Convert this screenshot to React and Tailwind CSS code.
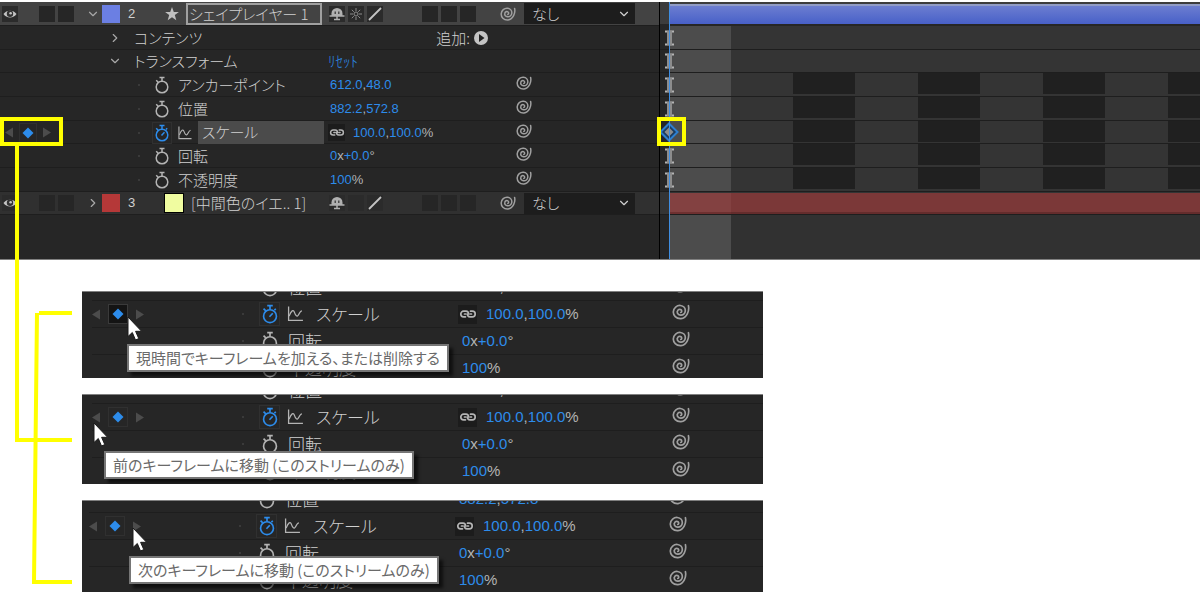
import React from 'react';
import { ChevronDown, ChevronRight } from 'lucide-react';
import clsx from 'clsx';

const PROPERTIES = [
    { name: 'アンカーポイント', value: '612.0,48.0' },
    { name: '位置', value: '882.2,572.8' },
    { name: 'スケール', value: '100.0,100.0%', animated: true },
    { name: '回転', value: '0x+0.0°' },
    { name: '不透明度', value: '100%' },
];

/* ---------- icons ---------- */

const Stopwatch = ({ active, className }) => (
    <svg viewBox="0 0 16 18" fill="none" stroke="currentColor" strokeWidth="1.5" className={className}>
        <circle cx="8" cy="11" r="5.8" />
        <path d="M5.5 1.5h5M8 1.5v3.5M2.2 4.2l2 2" />
        {active && <path d="M7.5 11.5l3-3.2M12 5.5l1.2-1.2" />}
    </svg>
);

const Spiral = ({ className }) => (
    <svg viewBox="0 0 16 14" fill="none" stroke="currentColor" strokeWidth="1.5" strokeLinecap="round" className={className}>
        <path d="M14.6 1.4C15.6 6 13.2 12.4 8 12.9 3.6 13.2 1 10 1.2 6.8 1.4 3.2 4.4 1 7.4 1.2c3 .3 4.6 2.6 4.4 5C11.6 8.6 9.6 10 7.6 9.8 5.4 9.6 4.4 8 4.8 6.4 5.1 4.9 6.8 4.1 8 5c1 .8.7 2.2-.2 2.4" />
    </svg>
);

const GraphIcon = ({ className }) => (
    <svg viewBox="0 0 16 15" fill="none" stroke="currentColor" strokeWidth="1.2" className={className}>
        <path d="M1.5 0.5v13H15" />
        <path d="M2 9.5C4 4 6 3 7 6s2.5 5 4 2 2-3.500 3-3.500" />
    </svg>
);

const LinkIcon = ({ className }) => (
    <svg viewBox="0 0 18 10" fill="none" stroke="currentColor" strokeWidth="1.7" strokeLinecap="round" className={className}>
        <path d="M6.5 7.8H4.600a2.700 2.700 0 0 1 0-5.600H7c2 0 2.500 1.300 2.500 2.800" />
        <path d="M11.5 2.2h1.900a2.700 2.700 0 0 1 0 5.600H11c-2 0-2.500-1.300-2.500-2.800" />
        <path d="M5.5 5h1.5M11 5h1.5" />
    </svg>
);

const EyeIcon = () => (
    <svg viewBox="0 0 16 16" className="size-4">
        <path d="M1.5 8C4 3.5 12 3.5 14.5 8 12 12.5 4 12.5 1.5 8Z" fill="#c4c4c4" />
        <circle cx="8" cy="7.8" r="3.2" fill="#333" />
        <circle cx="8.6" cy="7.2" r="1.3" fill="#c4c4c4" />
    </svg>
);

const ShyIcon = () => (
    <svg viewBox="0 0 16 16" className="size-4">
        <path d="M2.5 10V7.500a5.500 5.500 0 0 1 11 0V10Z" fill="#b0b0b0" />
        <path d="M6.2 5.500v2.500M9.8 5.500v2.500" stroke="#333" strokeWidth="1.2" />
        <path d="M0.500 10h15M8 8v5.500M5 13.500h6" stroke="#b0b0b0" strokeWidth="1.5" />
    </svg>
);

const SunIcon = () => (
    <svg viewBox="0 0 16 16" fill="none" stroke="#8c8c8c" className="size-4">
        <circle cx="8" cy="8" r="2" />
        <path d="M8 2v3M8 11v3M2 8h3M11 8h3M3.8 3.8l2 2M10.200 10.200l2 2M3.800 12.200l2-2M10.200 5.800l2-2" />
    </svg>
);

const SlashIcon = () => (
    <svg viewBox="0 0 16 16" className="size-4">
        <path d="M2 14L14 2" stroke="#c4c4c4" strokeWidth="1.8" />
    </svg>
);

const StarIcon = () => (
    <svg viewBox="0 0 16 16" className="size-4" fill="#c0c0c0">
        <path d="M8 1l1.800 4.900h5.100l-4.100 3.200 1.500 5.100L8 11.200l-4.300 3 1.500-5.100L1.100 5.900h5.100Z" />
    </svg>
);

const Diamond = () => (
    <svg viewBox="0 0 12 12" className="size-3" fill="#2d8ceb">
        <path d="M6 0.5L11.5 6 6 11.5 0.5 6Z" />
    </svg>
);

const Arrow = ({ left }) => (
    <svg viewBox="0 0 8 10" className="h-[11px] w-2" fill="#4c4c4c">
        <path d={left ? 'M8 0v10L0 5Z' : 'M0 0v10l8-5Z'} />
    </svg>
);

const Cursor = ({ className }) => (
    <svg viewBox="0 0 16 25" className={clsx('absolute h-[25px] w-4', className)}>
        <path d="M1 1v19.500l4.300-4 3.200 7.500 3.300-1.400-3.200-7.300h6Z" fill="#fff" stroke="#1a1a1a" />
    </svg>
);

/* ---------- shared pieces ---------- */

// Numbers are blue hot text, separators and units stay grey
const Value = ({ label, value, large }) => (
    <button
        aria-label={label}
        className={clsx(
            "flex items-baseline whitespace-nowrap font-['Liberation_Sans',sans-serif] text-[#2d8ceb]",
            large ? 'text-[15px]' : 'text-[13px]'
        )}
    >
        {value.split(/([,%x°])/).map((part, i) => (
            <span key={i} className={i % 2 ? 'text-[#b4b4b4]' : undefined}>{part}</span>
        ))}
    </button>
);

const KeyNav = ({ pressed, large }) => (
    <div className={clsx('flex items-center', large ? 'gap-2' : 'gap-[6px]')}>
        <button aria-label="前のキーフレーム"><Arrow left /></button>
        <button
            aria-label="キーフレーム"
            className={clsx('grid h-5 place-items-center border', large ? 'w-5' : 'w-[18px]', pressed ? 'border-[#3a3a3a] bg-[#141414]' : 'border-[#303030]')}
        >
            <Diamond />
        </button>
        <button aria-label="次のキーフレーム"><Arrow /></button>
    </div>
);

const StopwatchButton = ({ active, large }) => (
    <button
        aria-label="ストップウォッチ"
        className={clsx(
            'grid shrink-0 place-items-center border',
            large ? 'h-6 w-[21px]' : 'h-[22px] w-5',
            active ? 'border-[#303030] text-[#2d8ceb]' : 'border-transparent text-[#b4b4b4]'
        )}
    >
        <Stopwatch active={active} className={large ? 'h-5 w-[18px]' : 'h-[18px] w-4'} />
    </button>
);

const LinkButton = ({ large }) => (
    <button aria-label="縦横比を固定" className={clsx('grid place-items-center bg-[#1c1c1c] text-[#b4b4b4]', large ? 'h-[19px] w-[19px]' : 'h-[17px] w-[17px]')}>
        <LinkIcon className={large ? 'h-[10px] w-[18px]' : 'h-[9px] w-4'} />
    </button>
);

const PickWhip = ({ large }) => (
    <button aria-label="ピックウィップ" className="pb-1 text-[#a0a0a0]">
        <Spiral className={large ? 'h-4 w-[18px]' : 'h-[14px] w-4'} />
    </button>
);

const Slots = ({ count }) => Array.from({ length: count }, (_, i) => <span key={i} className="size-4 bg-[#262626]" />);

/* ---------- layer list ---------- */

const ROW = 'grid grid-cols-[82px_246px_172px_1fr] items-center border-b border-[#1e1e1e]';

const LayerRow = ({ id, open, swatch, selected, children }) => (
    <div className={clsx(ROW, selected ? 'bg-[#434343]' : 'bg-[#303030]')}>
        <div className="flex items-center gap-[3px] pl-[2px]">
            <button aria-label="表示" className="mr-[18px] bg-[#2b2b2b]"><EyeIcon /></button>
            <Slots count={2} />
        </div>
        <div className="flex items-center">
            <button aria-label="展開" className="w-5 pl-1 text-[#a8a8a8]">
                {open ? <ChevronDown size={14} /> : <ChevronRight size={14} />}
            </button>
            <span className={clsx('h-[18px] w-[18px]', swatch)} />
            <span className="w-11 pl-2 font-['Liberation_Sans',sans-serif] text-[13px]">{id}</span>
            {children}
        </div>
        <div className="flex items-center gap-[3px] pl-px">
            <span className="bg-[#2b2b2b]"><ShyIcon /></span>
            <span className="size-4 bg-[#2b2b2b]">{selected && <SunIcon />}</span>
            <span className="mr-[36px] bg-[#2b2b2b]"><SlashIcon /></span>
            <Slots count={3} />
        </div>
        <div className="flex items-center gap-2">
            <button aria-label="ピックウィップ" className="text-[#a0a0a0]"><Spiral className="h-[14px] w-4" /></button>
            <label className="relative flex items-center">
                <select aria-label="親とリンク" className="h-[21px] w-[111px] appearance-none bg-[#1d1d1d] pl-2 text-[15px] leading-5">
                    <option>なし</option>
                </select>
                <ChevronDown size={14} className="pointer-events-none absolute right-1" />
            </label>
        </div>
    </div>
);

const GroupRow = ({ name, open, children }) => (
    <div className={ROW}>
        <span />
        <div className="flex items-center">
            <button aria-label={name} className="w-[52px] pl-[26px] text-[#a8a8a8]">
                {open ? <ChevronDown size={14} /> : <ChevronRight size={14} />}
            </button>
            {name}
        </div>
        {children}
    </div>
);

const PropertyRow = ({ name, value, animated }) => (
    <div className={ROW}>
        <div className="pl-[5px]">{animated && <KeyNav />}</div>
        <div className="flex items-center">
            <span className="ml-14 mr-3 size-[2px] bg-[#3a3a3a]" />
            <StopwatchButton active={animated} />
            {animated ? (
                <>
                    <GraphIcon className="mx-[5px] h-[14px] w-4 text-[#b4b4b4]" />
                    <span className="mr-1 h-[23px] flex-1 bg-[#4b4b4b] pl-1 leading-[22px]">{name}</span>
                </>
            ) : (
                <span className="pl-[6px]">{name}</span>
            )}
        </div>
        <div className={clsx('flex items-center gap-2', !animated && 'pl-[2px]')}>
            {animated && <LinkButton />}
            <Value label={name} value={value} />
        </div>
        <div className="flex pl-4"><PickWhip /></div>
    </div>
);

const LayerList = () => (
    <div className="w-[660px] shrink-0 border-r border-black bg-[#262626] pb-11">
        <div className="grid grid-rows-[repeat(3,24px_24px_23px)]">
            <LayerRow id="2" open selected swatch="bg-[#6b7fe3]">
                <StarIcon />
                <span className="ml-[6px] mr-[6px] h-[22px] flex-1 whitespace-nowrap border-2 border-[#a0a0a0] pl-px leading-[18px]">
                    シェイプレイヤー 1
                </span>
            </LayerRow>
            <GroupRow name="コンテンツ">
                <div className="flex items-center justify-end gap-1 pr-3">
                    追加:
                    <button aria-label="追加">
                        <svg viewBox="0 0 14 14" className="size-[14px]">
                            <circle cx="7" cy="7" r="7" fill="#c4c4c4" />
                            <path d="M5 3l5.500 4L5 11Z" fill="#222" />
                        </svg>
                    </button>
                </div>
            </GroupRow>
            <GroupRow name="トランスフォーム" open>
                <button className="w-fit text-[#2d8ceb]">ﾘｾｯﾄ</button>
            </GroupRow>
            {PROPERTIES.map((p) => <PropertyRow key={p.name} {...p} />)}
            <LayerRow id="3" swatch="bg-[#b53838]">
                <span className="size-5 border border-black bg-[#f0fca0]" />
                <span className="whitespace-nowrap pl-[7px]">[中間色のイエ.. 1]</span>
            </LayerRow>
        </div>
    </div>
);

/* ---------- timeline ---------- */

const IBeam = () => (
    <svg viewBox="0 0 9 16" className="absolute left-[5px] h-4 w-[9px]" fill="none" stroke="#b4b4b4">
        <path d="M0 1.500h9M0 14.500h9" strokeWidth="2" />
        <path d="M4.500 1v14" strokeWidth="5" stroke="#8c8c8c" />
    </svg>
);

const Keyframe = () => (
    <svg viewBox="0 0 20 20" className="absolute left-[-1px] size-5">
        <path d="M10 1.500l8.500 8.500-8.500 8.500L1.500 10Z" fill="#1c3c60" stroke="#2d7fd0" strokeWidth="2" />
        <path d="M10 5.500l4.500 4.500-4.500 4.500L5.500 10Z" fill="#8c8c8c" />
    </svg>
);

const Track = ({ striped, children }) => (
    <div className="relative flex items-center border-b border-[#1e1e1e]">
        <span className="w-[9px] self-stretch bg-[#262626]" />
        <span className="w-[62px] self-stretch bg-[#4c4c4c]" />
        <span className="flex flex-1 self-stretch bg-[#343434]">
            {striped && (
                <span className="h-[21px] flex-1 bg-[repeating-linear-gradient(to_right,transparent_0_62px,#202020_62px_124px,transparent_124px_125px)]" />
            )}
        </span>
        {children}
    </div>
);

const Timeline = () => (
    <div className="relative flex min-w-0 flex-1 flex-col overflow-hidden">
        <div className="grid grid-rows-[repeat(3,24px_24px_23px)]">
            <div className="flex border-b-2 border-[#262626] bg-[#3c3c3c] pl-[9px] pt-[2px]">
                <div className="h-5 flex-1 border-t-2 border-[#919cc6] bg-linear-to-b from-[#6c7dd0] to-[#4860c8]" />
            </div>
            <Track><IBeam /></Track>
            <Track><IBeam /></Track>
            {PROPERTIES.map((p) => (
                <Track key={p.name} striped>{p.animated ? <Keyframe /> : <IBeam />}</Track>
            ))}
            <div className="flex border-b border-[#1e1e1e] bg-[#343434] pl-[9px] pt-px">
                <div className="h-[21px] w-[62px] border-b-2 border-[#6e3030] bg-[#834141]" />
                <div className="h-[21px] flex-1 border-b-2 border-[#642c2c] bg-[#7b3838]" />
            </div>
        </div>
        <div className="flex flex-1">
            <span className="w-[9px] bg-[#262626]" />
            <span className="w-[62px] bg-[#4c4c4c]" />
            <span className="flex-1 bg-[#313131]" />
        </div>
        <span className="absolute inset-y-0 left-[9px] w-px bg-[#3f8de0]" />
    </div>
);

/* ---------- enlarged details ---------- */

const DETAIL_ROW = 'grid h-[27px] grid-cols-[150px_216px_214px_1fr] items-center border-b border-[#1e1e1e]';

const DetailRow = ({ name, value, animated, pressed }) => (
    <div className={DETAIL_ROW}>
        {animated ? <KeyNav large pressed={pressed} /> : <span />}
        <div className="flex items-center">
            <span className="mr-[15px] size-[2px] bg-[#3a3a3a]" />
            <StopwatchButton active={animated} large />
            {animated && <GraphIcon className="ml-[7px] mr-1 h-4 w-[17px] text-[#b4b4b4]" />}
            <span className="pl-2 text-[17px]">{name}</span>
        </div>
        <div className={clsx('flex items-center gap-[9px]', !animated && 'pl-1')}>
            {animated && <LinkButton large />}
            <Value label={name} value={value} large />
        </div>
        <div className="flex"><PickWhip large /></div>
    </div>
);

// The first row is scrolled partly out of view, so rowsClass pulls the list up
const Detail = ({ tip, className, rowsClass, tipClass, cursorClass, pressed }) => (
    <div className={clsx('relative overflow-hidden border-t border-[#808080] bg-[#262626]', className)}>
        <div className={rowsClass}>
            {PROPERTIES.slice(1).map((p) => <DetailRow key={p.name} {...p} pressed={pressed} />)}
        </div>
        <div
            role="tooltip"
            className={clsx('absolute h-7 whitespace-nowrap border-2 border-[#767676] bg-white px-[7px] font-normal leading-6 text-[#6a6a6a] shadow-[4px_4px_3px_rgba(0,0,0,0.6)]', tipClass)}
        >
            {tip}
        </div>
        <Cursor className={cursorClass} />
    </div>
);

export default function App() {
    return (
        <main className="relative min-h-screen overflow-hidden bg-white pt-[2px] font-['Noto_Sans_CJK_JP',sans-serif] text-[15px] font-light leading-5 text-[#d0d0d0] [font-feature-settings:'palt']">
            <section className="flex border-b border-[#808080] bg-[#262626]">
                <LayerList />
                <Timeline />
            </section>

            <section className="flex max-w-[763px] flex-col gap-4 pl-[82px] pt-[31px]">
                <Detail
                    tip="現時間でキーフレームを加える、または削除する"
                    className="h-[87px]"
                    rowsClass="-mt-[18px] pl-[10px]"
                    tipClass="left-[45px] top-[52px]"
                    cursorClass="left-[45px] top-[24px]"
                    pressed
                />
                <Detail
                    tip="前のキーフレームに移動 (このストリームのみ)"
                    className="h-[90px]"
                    rowsClass="-mt-[18px] pl-[10px]"
                    tipClass="left-[22px] top-[56px]"
                    cursorClass="left-[11px] top-[27px]"
                />
                <Detail
                    tip="次のキーフレームに移動 (このストリームのみ)"
                    className="h-[92px]"
                    rowsClass="-mt-[15px] pl-[7px]"
                    tipClass="left-[47px] top-[55px]"
                    cursorClass="left-[50px] top-[26px]"
                />
            </section>

            {/* Yellow call-outs linking the key navigator to the details */}
            <svg className="pointer-events-none absolute left-0 top-0" width="700" height="600" fill="none" stroke="#ff0" strokeWidth="4">
                <path d="M2 119h59v25H2ZM659 119h25v25h-25Z" />
                <path d="M17 144v296h55M72 313H39M37 313L34 582h38" />
            </svg>
        </main>
    );
}
